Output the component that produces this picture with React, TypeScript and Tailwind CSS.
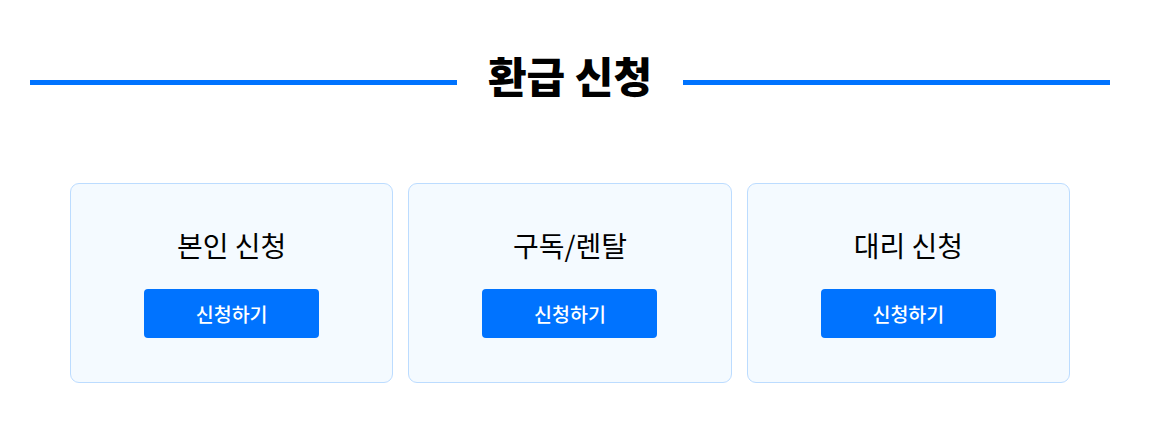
import React from "react";

const items = ["본인 신청", "구독/렌탈", "대리 신청"];

export default function App() {
  return (
    <div
      className="w-[1140px] bg-white"
      style={{ fontFamily: '"Noto Sans CJK KR", "Noto Sans", sans-serif' }}
    >
      <div className="flex items-start gap-[31px] px-[30px] pt-[50px]">
        <div className="mt-[30px] h-[5px] flex-1 bg-[#0073ff]" />
        <h2 className="text-[42px] font-black leading-[50px] text-black">환급 신청</h2>
        <div className="mt-[30px] h-[5px] flex-1 bg-[#0073ff]" />
      </div>
      <div className="mt-[83px] grid grid-cols-3 gap-[15px] px-[70px] pb-[46px]">
        {items.map((t) => (
          <div
            key={t}
            className="flex h-[200px] flex-col items-center rounded-[9px] border border-[#bcdcff] bg-[#f4faff] pt-[42px]"
          >
            <div className="text-[28px] leading-[38px] text-black">{t}</div>
            <button className="mt-[25px] h-[49px] w-[175px] rounded-[4px] bg-[#0073ff] text-[19.5px] font-medium text-white">
              신청하기
            </button>
          </div>
        ))}
      </div>
    </div>
  );
}
